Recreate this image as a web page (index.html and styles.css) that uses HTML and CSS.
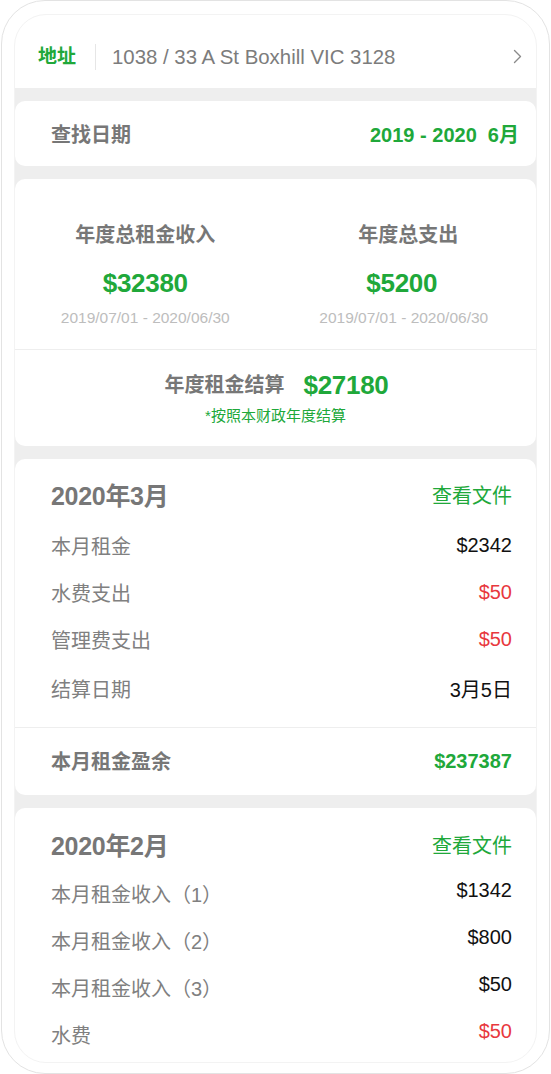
FILE: index.html
```html
<!DOCTYPE html>
<html lang="zh-CN">
<head>
<meta charset="utf-8">
<title>租金结算</title>
<link rel="stylesheet" href="styles.css">
</head>
<body>
<div class="device">
  <div class="screen">
    <header class="addr">
      <span class="addr-label">地址</span>
      <span class="addr-sep"></span>
      <span class="addr-text">1038 / 33 A St Boxhill VIC 3128</span>
      <svg class="chev" width="9" height="15" viewBox="0 0 9 15"><polyline points="1.5,1.5 7.5,7.5 1.5,13.5" fill="none" stroke="#8a8a8a" stroke-width="1.4" stroke-linecap="round" stroke-linejoin="round"/></svg>
    </header>
    <main class="body">
      <section class="card date-card">
        <span class="date-label">查找日期</span>
        <span class="date-value">2019 - 2020&nbsp;&nbsp;6月</span>
      </section>

      <section class="card summary">
        <div class="sum-cols">
          <div class="sum-col">
            <div class="sum-title">年度总租金收入</div>
            <div class="sum-amount">$32380</div>
            <div class="sum-range">2019/07/01 - 2020/06/30</div>
          </div>
          <div class="sum-col sum-col-right">
            <div class="sum-title">年度总支出</div>
            <div class="sum-amount">$5200</div>
            <div class="sum-range">2019/07/01 - 2020/06/30</div>
          </div>
        </div>
        <div class="sum-total">
          <div class="total-line">
            <span class="total-label">年度租金结算</span>
            <span class="sum-amount">$27180</span>
          </div>
          <div class="total-note">*按照本财政年度结算</div>
        </div>
      </section>

      <section class="card month">
        <div class="month-main">
          <div class="month-head">
            <span class="month-title">2020年3月</span>
            <span class="month-link">查看文件</span>
          </div>
          <div class="rows">
            <div class="row"><span class="row-label">本月租金</span><span class="row-val">$2342</span></div>
            <div class="row"><span class="row-label">水费支出</span><span class="row-val red">$50</span></div>
            <div class="row"><span class="row-label">管理费支出</span><span class="row-val red">$50</span></div>
            <div class="row row-gap"><span class="row-label">结算日期</span><span class="row-val">3月5日</span></div>
          </div>
        </div>
        <div class="month-total">
          <span class="total-label">本月租金盈余</span>
          <span class="total-val">$237387</span>
        </div>
      </section>

      <section class="card month month-last">
        <div class="month-main">
          <div class="month-head">
            <span class="month-title">2020年2月</span>
            <span class="month-link">查看文件</span>
          </div>
          <div class="rows rows-feb">
            <div class="row"><span class="row-label">本月租金收入（1）</span><span class="row-val up">$1342</span></div>
            <div class="row"><span class="row-label">本月租金收入（2）</span><span class="row-val up">$800</span></div>
            <div class="row"><span class="row-label">本月租金收入（3）</span><span class="row-val up">$50</span></div>
            <div class="row"><span class="row-label">水费</span><span class="row-val up red">$50</span></div>
          </div>
        </div>
      </section>
    </main>
  </div>
</div>
</body>
</html>
```

FILE: styles.css
```css
html, body {
  margin: 0;
  padding: 0;
  background: #fff;
}
body {
  width: 551px;
  height: 1074px;
  overflow: hidden;
  font-family: "Liberation Sans", "Noto Sans CJK SC", sans-serif;
  color: #111;
}
.device {
  box-sizing: border-box;
  margin-left: 1px;
  width: 549px;
  height: 1074px;
  border: 1px solid #e3e3e3;
  border-radius: 44px;
  padding: 13px 12px 10px 12px;
  background: #fff;
}
.screen {
  box-sizing: border-box;
  height: 100%;
  border: 1px solid #f3f3f3;
  border-radius: 32px;
  overflow: hidden;
  display: flex;
  flex-direction: column;
  background: #fff;
}

/* address bar */
.addr {
  box-sizing: border-box;
  height: 73px;
  flex: none;
  display: flex;
  align-items: center;
  padding: 10px 14px 0 23px;
}
.addr-label {
  font-size: 19px;
  font-weight: bold;
  color: #20a83a;
  line-height: 26px;
}
.addr-sep {
  width: 1px;
  height: 26px;
  background: #e6e6e6;
  margin: 0 16px 0 19px;
}
.addr-text {
  font-size: 20.4px;
  color: #7c7c7c;
  line-height: 26px;
}
.chev {
  margin-left: auto;
  display: block;
}

/* body */
.body {
  flex: 1;
  background: #eeeeee;
  padding-top: 13px;
  display: flex;
  flex-direction: column;
  gap: 13px;
}
.card {
  background: #fff;
  border-radius: 10px;
}

/* date card */
.date-card {
  box-sizing: border-box;
  height: 65px;
  display: flex;
  align-items: center;
  justify-content: space-between;
  padding: 0 17px 0 36px;
}
.date-label {
  font-size: 20px;
  font-weight: bold;
  color: #777;
}
.date-value {
  font-size: 20px;
  font-weight: bold;
  color: #20a83a;
}

/* summary */
.summary {
  box-sizing: border-box;
  height: 267px;
  display: flex;
  flex-direction: column;
}
.sum-cols {
  display: grid;
  grid-template-columns: 1fr 1fr;
  padding: 42px 0 21px;
  border-bottom: 1px solid #eeeeee;
}
.sum-col {
  display: flex;
  flex-direction: column;
  align-items: center;
}
.sum-col-right {
  padding-left: 5px;
}
.sum-title {
  font-size: 20px;
  font-weight: bold;
  color: #777;
  line-height: 28px;
}
.sum-amount {
  font-size: 26px;
  font-weight: bold;
  color: #20a83a;
  line-height: 34px;
  letter-spacing: -0.3px;
}
.sum-col .sum-amount {
  margin-top: 17px;
}
.sum-col-right .sum-amount {
  margin-right: 13px;
}
.sum-range {
  margin-top: 8px;
  font-size: 15.5px;
  color: #bdbdbd;
  line-height: 20px;
}
.sum-col-right .sum-range {
  margin-right: 9px;
}
.sum-total {
  display: flex;
  flex-direction: column;
  align-items: center;
  padding-top: 18px;
}
.total-line {
  display: flex;
  align-items: center;
  gap: 19px;
  padding-left: 2px;
}
.total-label {
  font-size: 20px;
  font-weight: bold;
  color: #777;
  line-height: 34px;
}
.total-note {
  margin-top: 4px;
  font-size: 15px;
  color: #20a83a;
  line-height: 20px;
}

/* month cards */
.month-main {
  padding: 15px 24px 15px 36px;
  border-bottom: 1px solid #eeeeee;
}
.month-last .month-main {
  border-bottom: none;
  padding-top: 16px;
}
.month-head {
  height: 40px;
  display: flex;
  align-items: center;
  justify-content: space-between;
}
.month-title {
  font-size: 25px;
  font-weight: bold;
  color: #777;
  letter-spacing: -0.3px;
}
.month-link {
  font-size: 20px;
  color: #20a83a;
}
.rows {
  margin-top: 8px;
  display: flex;
  flex-direction: column;
}
.rows-feb {
  margin-top: 6px;
}
.row {
  height: 47px;
  display: flex;
  align-items: center;
  justify-content: space-between;
}
.row-gap {
  margin-top: 2px;
}
.row-label {
  font-size: 20px;
  color: #808080;
}
.row-val {
  font-size: 20px;
  color: #111;
}
.row-val.up {
  margin-bottom: 6px;
}
.red {
  color: #e8383d;
}
.month-total {
  box-sizing: border-box;
  height: 67px;
  display: flex;
  align-items: center;
  justify-content: space-between;
  padding: 0 24px 0 36px;
}
.total-val {
  font-size: 20px;
  font-weight: bold;
  color: #20a83a;
}
.month-last {
  flex: 1;
}
```
